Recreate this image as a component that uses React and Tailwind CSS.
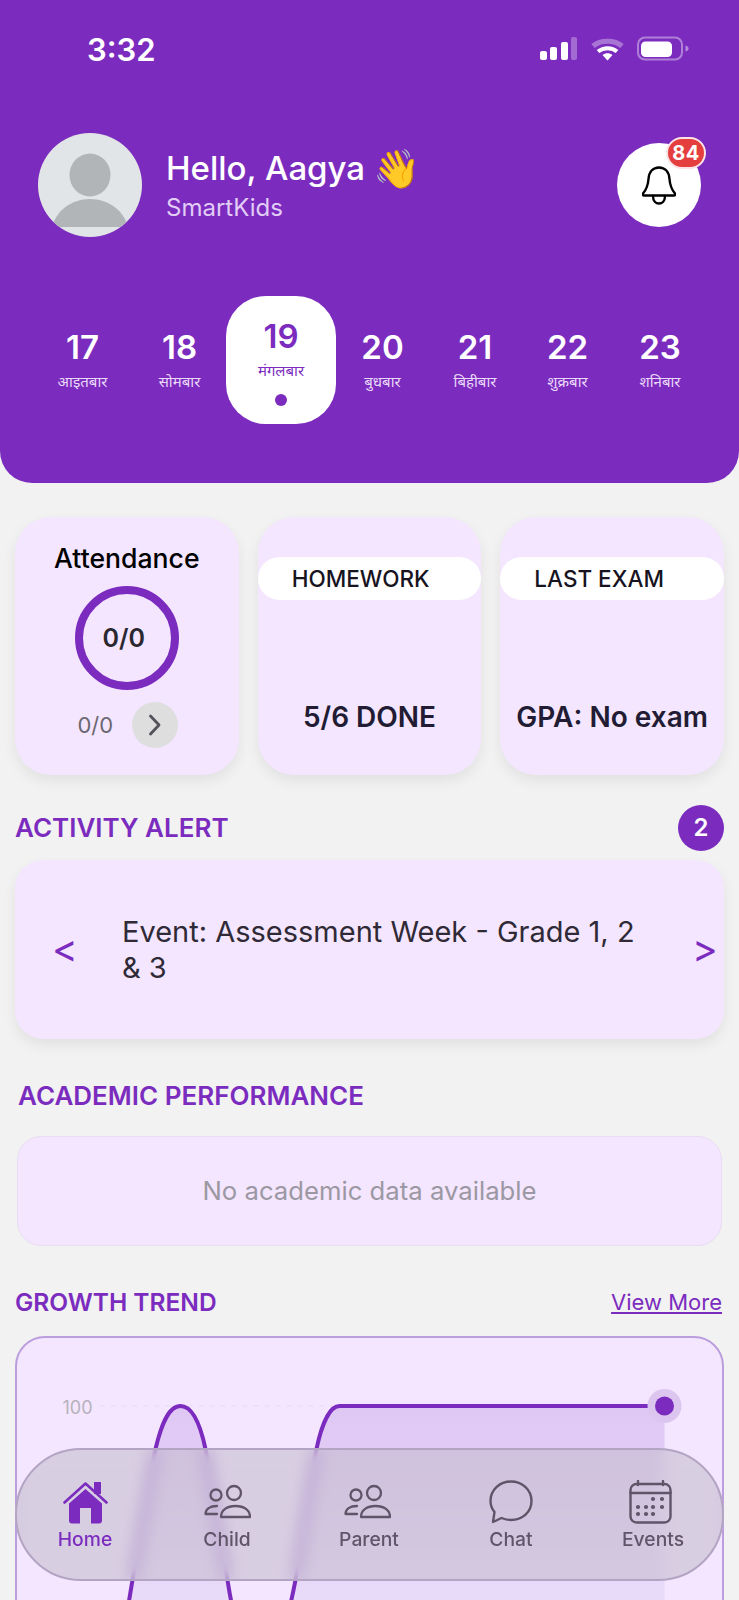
import React from 'react';

const days = [
  { num: '17', label: 'आइतबार' },
  { num: '18', label: 'सोमबार' },
  { num: '19', label: 'मंगलबार', active: true },
  { num: '20', label: 'बुधबार' },
  { num: '21', label: 'बिहीबार' },
  { num: '22', label: 'शुक्रबार' },
  { num: '23', label: 'शनिबार' },
];

const cardClass = 'bg-[#f3e6fe] rounded-[36px] h-[258px] shadow-[0_6px_14px_rgba(0,0,0,0.07)]';

function StatusIcons() {
  return (
    <svg width="150" height="26" viewBox="0 0 150 26" fill="none">
      <rect x="1" y="15" width="7" height="9" rx="2" fill="#fff" />
      <rect x="11" y="11" width="7" height="13" rx="2" fill="#fff" />
      <rect x="22" y="6" width="7" height="18" rx="2" fill="#fff" />
      <rect x="32" y="1" width="6" height="23" rx="2" fill="#fff" fillOpacity="0.3" />
      <path d="M54 10C61.5 3.5 75.5 3.5 83 10" stroke="#fff" strokeOpacity="0.35" strokeWidth="5" />
      <path d="M59 15.5C64.5 11 73 11 78 15.5" stroke="#fff" strokeWidth="4" />
      <path d="M68.5 24.5L63.5 19C66.5 16.5 70.5 16.5 73.5 19Z" fill="#fff" />
      <rect x="99" y="1.5" width="44" height="22" rx="7" stroke="#fff" strokeOpacity="0.4" strokeWidth="2" />
      <rect x="102" y="5.5" width="31" height="15.5" rx="4.5" fill="#fff" />
      <path d="M146.5 9.5C148.5 10 149.5 11 149.5 12.5C149.5 14 148.5 15 146.5 15.5Z" fill="#fff" fillOpacity="0.45" />
    </svg>
  );
}

function Avatar() {
  return (
    <svg width="104" height="104" viewBox="0 0 104 104" className="shrink-0 rounded-full">
      <rect width="104" height="104" fill="#e2e5e7" />
      <ellipse cx="52" cy="42" rx="20.5" ry="21.5" fill="#b1b5b8" />
      <path d="M14 94C18 78 33 66 52 66C71 66 86 78 90 94Z" fill="#b1b5b8" />
    </svg>
  );
}

function Bell() {
  return (
    <svg width="34" height="39" viewBox="0 0 34 39" fill="none" stroke="#000" strokeWidth="2.4" strokeLinejoin="round" strokeLinecap="round">
      <path d="M17 1.5C23 1.5 27 6 27.5 13C28 20 30 24 33 27.5C33.5 28.5 33 29.5 32 29.5H2C1 29.5 .5 28.5 1 27.5C4 24 6 20 6.5 13C7 6 11 1.5 17 1.5Z" />
      <path d="M11 30C11 35 14 37.5 17 37.5C20 37.5 23 35 23 30" />
    </svg>
  );
}

function HomeIcon() {
  return (
    <svg width="45" height="44" viewBox="0 0 45 44" fill="#7b2cbf">
      <rect x="31" y="2" width="7" height="12" />
      <path d="M1.5 22.5L22.5 3.5L43.5 22.5" fill="none" stroke="#7b2cbf" strokeWidth="2.6" strokeLinecap="round" strokeLinejoin="round" />
      <path d="M22.5 9L39 23.5V40.5A3 3 0 0 1 36 43.5H28V28H17V43.5H9A3 3 0 0 1 6 40.5V23.5Z" />
    </svg>
  );
}

function PeopleIcon() {
  return (
    <svg width="47" height="44" viewBox="0 0 47 44" fill="none" stroke="#5f5468" strokeWidth="2.3" strokeLinecap="round" strokeLinejoin="round">
      <g transform="translate(0 5)">
        <circle cx="30" cy="8" r="7" />
        <circle cx="12" cy="10" r="5.5" />
        <path d="M17 32C17 25 23 21 31.5 21C40 21 46 25 46 32Z" />
        <path d="M13 21C6 21 1.5 24 1.5 29H13" />
      </g>
    </svg>
  );
}

function ChatIcon() {
  return (
    <svg width="44" height="44" viewBox="0 0 44 44" fill="none" stroke="#5f5468" strokeWidth="2.4" strokeLinejoin="round">
      <path d="M22 1.5C33.5 1.5 42.5 10 42.5 21C42.5 32 33.5 40 22 40C18.5 40 15.5 39.3 12.5 38L4 42L5.5 32C3 29 1.5 25 1.5 21C1.5 10 10.5 1.5 22 1.5Z" />
    </svg>
  );
}

function CalendarIcon() {
  const dots = [[24, 19], [33, 19], [9, 27], [17, 27], [24, 27], [33, 27], [9, 34], [17, 34], [24, 34]];
  return (
    <svg width="43" height="44" viewBox="0 0 43 44" fill="none" stroke="#5f5468" strokeWidth="2.4" strokeLinecap="round">
      <rect x="1.5" y="4" width="40" height="38.5" rx="6" />
      <path d="M1.5 13H41.5M9 1V5M34 1V5" />
      {dots.map(([cx, cy]) => (
        <circle key={`${cx}-${cy}`} cx={cx} cy={cy} r="2.1" fill="#5f5468" stroke="none" />
      ))}
    </svg>
  );
}

function Chart() {
  const line =
    'M126 1620C129 1605 131 1592 133 1580C140 1540 149 1480 156 1449C161 1428 168 1406 181 1406C195 1406 202 1430 206 1449C214 1490 222 1545 228 1580C232 1605 236 1640 260 1640C285 1640 290 1612 296 1580C303 1530 310 1480 317 1449C322 1425 330 1406 340 1406L665 1406';
  return (
    <svg className="block w-full h-[262px]" viewBox="18 1338 704 262" fill="none">
      <defs>
        <linearGradient id="area" x1="0" y1="0" x2="0" y2="1">
          <stop offset="0" stopColor="#dfc7f4" />
          <stop offset="1" stopColor="#ebdffb" />
        </linearGradient>
      </defs>
      <text x="63" y="1414" fontSize="18" fill="#b7b1bd">100</text>
      <path d="M100 1406H340" stroke="#e6daf0" strokeWidth="1" strokeDasharray="5 6" />
      <path d={`${line}L665 1640L126 1640Z`} fill="url(#area)" />
      <path d={line} stroke="#7b2cbf" strokeWidth="4" />
      <circle cx="665" cy="1406" r="17" fill="#dcc6ef" />
      <circle cx="665" cy="1406" r="9.5" fill="#7b2cbf" />
    </svg>
  );
}

const navItems = [
  { label: 'Home', icon: <HomeIcon />, active: true, iconClass: '' },
  { label: 'Child', icon: <PeopleIcon />, iconClass: '' },
  { label: 'Parent', icon: <PeopleIcon />, iconClass: '-ml-[4px]' },
  { label: 'Chat', icon: <ChatIcon />, iconClass: '' },
  { label: 'Events', icon: <CalendarIcon />, iconClass: '-ml-[6px]' },
];

export default function App() {
  return (
    <div className="relative w-[739px] h-[1600px] overflow-hidden bg-[#f2f2f2] font-['Inter','Noto_Sans',sans-serif]">
      <header className="bg-[#7b2cbf] rounded-b-[32px] h-[483px]">
        <div className="h-[98px] flex items-center justify-between pl-[87px] pr-[50px]">
          <span className="text-white text-[31px] font-semibold pt-[2px]">3:32</span>
          <StatusIcons />
        </div>

        <div className="mt-[35px] px-[38px] flex items-center justify-between">
          <div className="flex items-center gap-6">
            <Avatar />
            <div className="pt-[2px]">
              <div className="text-white text-[33px] leading-[40px] font-medium flex items-center">
                Hello, Aagya
                <span className="ml-[8px] text-[38px] leading-[40px]">👋</span>
              </div>
              <div className="mt-[4px] text-[#e2cdf6] text-[24px] leading-[32px]">SmartKids</div>
            </div>
          </div>
          <div className="relative w-[84px] h-[84px] rounded-full bg-white flex items-center justify-center">
            <Bell />
            <div className="absolute -top-[6px] -right-[5px] w-[40px] h-[32px] rounded-full bg-[#e53e3e] border-2 border-[#fbe3e6] text-white text-[20px] leading-none font-bold tracking-[0.5px] flex items-center justify-center">84</div>
          </div>
        </div>

        <div className="mt-[59px] ml-[32px] grid grid-cols-[101px_93px_110px_93px_92px_93px_92px] h-[128px]">
          {days.map((d) =>
            d.active ? (
              <div key={d.num} className="bg-white rounded-[40px] flex flex-col items-center pt-[20px]">
                <div className="text-[#7b2cbf] text-[33px] leading-[40px] font-semibold">{d.num}</div>
                <div className="text-[#7b2cbf] text-[15px] leading-[20px] mt-[5px]">{d.label}</div>
                <div className="w-[12px] h-[12px] rounded-full bg-[#7b2cbf] mt-[13px]" />
              </div>
            ) : (
              <div key={d.num} className="flex flex-col items-center pt-[31px]">
                <div className="text-white text-[33px] leading-[40px] font-semibold">{d.num}</div>
                <div className="text-[#ead9f8] text-[15px] leading-[20px] mt-[5px]">{d.label}</div>
              </div>
            )
          )}
        </div>
      </header>

      <main className="px-[15px]">
        <div className="mt-[34px] grid grid-cols-3 gap-[19px]">
          <div className={`${cardClass} flex flex-col items-center pt-[24px]`}>
            <div className="text-black text-[26.6px] leading-[34px] font-medium">Attendance</div>
            <div className="mt-[11px] w-[104px] h-[104px] rounded-full border-[8px] border-[#7b2cbf] flex items-center justify-center pr-[6px] pt-[1px] text-[25px] font-semibold text-[#2a2730]">0/0</div>
            <div className="mt-[12px] flex items-center gap-[19px]">
              <span className="text-[#6b6770] text-[22px] pl-[2px]">0/0</span>
              <div className="w-[46px] h-[46px] rounded-full bg-[#dedede] flex items-center justify-center">
                <svg width="14" height="24" viewBox="0 0 14 24" fill="none" stroke="#55525a" strokeWidth="2.8" strokeLinecap="round" strokeLinejoin="round"><path d="M2.5 3L11 12L2.5 21" /></svg>
              </div>
            </div>
          </div>

          <div className={`${cardClass} pt-[40px]`}>
            <div className="h-[43px] bg-white rounded-full flex items-center pl-[34px] pt-[1px] text-[22.5px] font-medium text-[#17141f]">HOMEWORK</div>
            <div className="mt-[100px] text-center text-[28px] leading-[34px] font-semibold text-[#211c33]">5/6 DONE</div>
          </div>

          <div className={`${cardClass} pt-[40px]`}>
            <div className="h-[43px] bg-white rounded-full flex items-center pl-[34px] pt-[1px] text-[22.5px] font-medium text-[#17141f]">LAST EXAM</div>
            <div className="mt-[100px] text-center text-[28px] leading-[34px] font-semibold text-[#211c33]">GPA: No exam</div>
          </div>
        </div>

        <div className="mt-[30px] h-[46px] flex items-center justify-between">
          <h2 className="text-[#7b2cbf] text-[26px] font-semibold pb-[2px]">ACTIVITY ALERT</h2>
          <div className="w-[46px] h-[46px] rounded-full bg-[#7b2cbf] text-white text-[24px] font-semibold flex items-center justify-center">2</div>
        </div>
        <div className="mt-[9px] h-[179px] bg-[#f3e6fe] rounded-[28px] shadow-[0_6px_14px_rgba(0,0,0,0.07)] flex items-center pl-[37px]">
          <span className="text-[#7b2cbf] text-[39px] w-[70px]">&lt;</span>
          <p className="w-[530px] text-[29px] leading-[36px] text-[#2f2a36]">Event: Assessment Week - Grade 1, 2 &amp; 3</p>
          <span className="ml-auto text-[#7b2cbf] text-[39px] w-[32px]">&gt;</span>
        </div>

        <h2 className="mt-[40px] pl-[3px] text-[#7b2cbf] text-[26px] leading-[34px] font-semibold">ACADEMIC PERFORMANCE</h2>
        <div className="mt-[23px] mx-[2px] h-[110px] bg-[#f3e6fe] border border-[#e8ddf3] rounded-[24px] flex items-center justify-center pt-[1px] text-[25.7px] text-[#9c98a3]">No academic data available</div>

        <div className="mt-[40px] flex items-center justify-between">
          <h2 className="text-[#7b2cbf] text-[24.5px] leading-[32px] font-semibold">GROWTH TREND</h2>
          <a className="text-[#7b2cbf] text-[22px] leading-[32px] underline pr-[2px]">View More</a>
        </div>
        <div className="mt-[18px] h-[320px] bg-[#f3e6fe] border-2 border-[#bb9edd] rounded-[30px] overflow-hidden">
          <Chart />
        </div>
      </main>

      <nav className="absolute left-[15px] bottom-[19px] w-[709px] h-[133px] rounded-[66px] border-2 border-[#b3a4c4] bg-[rgba(192,186,200,0.53)] backdrop-blur-[8px] pt-[30px]">
        <div className="-ml-[3px] grid grid-cols-[repeat(5,142px)]">
          {navItems.map((item) => (
            <div key={item.label} className="flex flex-col items-center">
              <div className={`h-[44px] flex items-start ${item.iconClass}`}>{item.icon}</div>
              <span className={`mt-[3px] text-[19.3px] leading-[24px] font-medium ${item.active ? 'text-[#7b2cbf]' : 'text-[#5f5468]'}`}>{item.label}</span>
            </div>
          ))}
        </div>
      </nav>
    </div>
  );
}
